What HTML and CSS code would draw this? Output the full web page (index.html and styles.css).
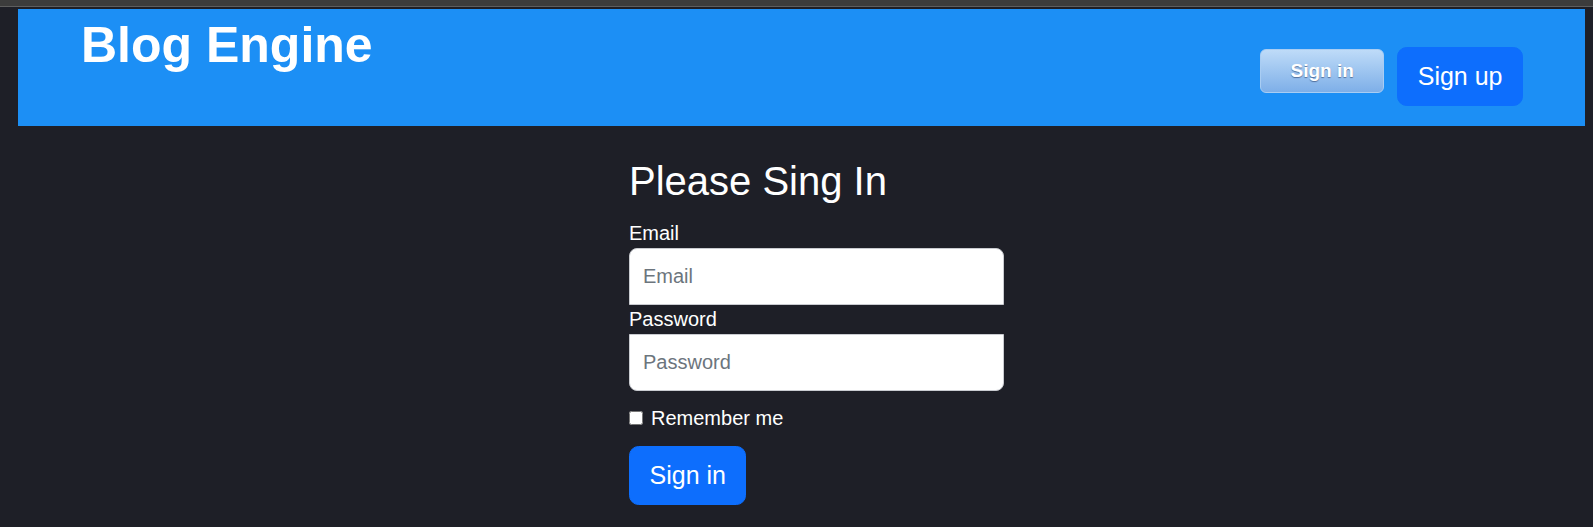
FILE: index.html
```html
<!DOCTYPE html>
<html lang="en">
<head>
<meta charset="utf-8">
<title>Blog Engine - Sign in</title>
<link rel="stylesheet" href="styles.css">
</head>
<body>
<div class="topstrip"></div>
<header class="site-header">
  <h1 class="brand">Blog Engine</h1>
  <nav class="header-actions">
    <button class="btn-ghost" type="button">Sign in</button>
    <button class="btn-primary btn-lg" type="button">Sign up</button>
  </nav>
</header>
<main class="form-signin">
  <form>
    <h2 class="form-title">Please Sing In</h2>
    <label class="field-label" for="email">Email</label>
    <input class="field field-top" id="email" type="email" placeholder="Email">
    <label class="field-label" for="password">Password</label>
    <input class="field field-bottom" id="password" type="password" placeholder="Password">
    <div class="check-row">
      <input class="check" id="remember" type="checkbox">
      <label for="remember">Remember me</label>
    </div>
    <button class="btn-primary btn-lg" type="submit">Sign in</button>
  </form>
</main>
</body>
</html>
```

FILE: styles.css
```css
html, body {
  margin: 0;
  padding: 0;
}
body {
  background: #1e1f27;
  color: #ffffff;
  font-family: "Liberation Sans", Arial, sans-serif;
  height: 527px;
  overflow: hidden;
}
.topstrip {
  height: 6px;
  background: #3c3c3c;
  border-bottom: 1px solid #5e5e5e;
  margin-bottom: 2px;
}
.site-header {
  margin: 0 8px 0 18px;
  height: 117px;
  background: #1c8ff5;
  display: flex;
  justify-content: space-between;
  align-items: flex-start;
  padding: 0 62px 0 63px;
  box-sizing: border-box;
}
.brand {
  margin: 6px 0 0 0;
  font-size: 50px;
  line-height: 60px;
  font-weight: 700;
  color: #ffffff;
}
.header-actions {
  display: flex;
  align-items: flex-start;
  gap: 13px;
  margin-top: 38px;
}
.btn-ghost {
  margin-top: 2px;
  width: 124px;
  height: 44px;
  border: 1px solid #a9cdf3;
  border-radius: 6px;
  background: linear-gradient(#bedbf8, #7eafe8);
  color: #ffffff;
  font-family: "Liberation Sans", Arial, sans-serif;
  font-weight: 700;
  font-size: 19px;
  text-shadow: 0 1px 1px rgba(40, 60, 100, 0.6);
  padding: 0;
  cursor: pointer;
}
.btn-primary {
  background: #0d6efd;
  color: #ffffff;
  border: 1.2px solid #0d6efd;
  font-family: "Liberation Sans", Arial, sans-serif;
  cursor: pointer;
}
.btn-lg {
  font-size: 25px;
  line-height: 37.5px;
  padding: 9.6px 19.5px;
  border-radius: 9.6px;
}
.form-signin {
  margin-left: 629px;
  width: 375px;
}
.form-signin form {
  display: flex;
  flex-direction: column;
  align-items: flex-start;
}
.form-title {
  margin: 32px 0 13.5px 0;
  font-size: 40px;
  line-height: 47.4px;
  font-weight: 400;
}
.field-label {
  font-size: 20px;
  line-height: 28.8px;
}
.field {
  width: 375px;
  height: 57px;
  box-sizing: border-box;
  border: 1px solid #c9cbd0;
  background: #ffffff;
  padding: 0 13px;
  font-family: "Liberation Sans", Arial, sans-serif;
  font-size: 20px;
  color: #212529;
  outline: none;
}
.field::placeholder {
  color: #6c757d;
}
.field-top {
  border-radius: 8px 8px 0 0;
}
.field-bottom {
  border-radius: 0 0 8px 8px;
}
.check-row {
  display: flex;
  align-items: center;
  margin: 13.5px 0 13.5px 0;
  font-size: 20px;
  line-height: 28.8px;
}
.check {
  width: 14px;
  height: 14px;
  margin: 0 8px 0 0;
}
```
